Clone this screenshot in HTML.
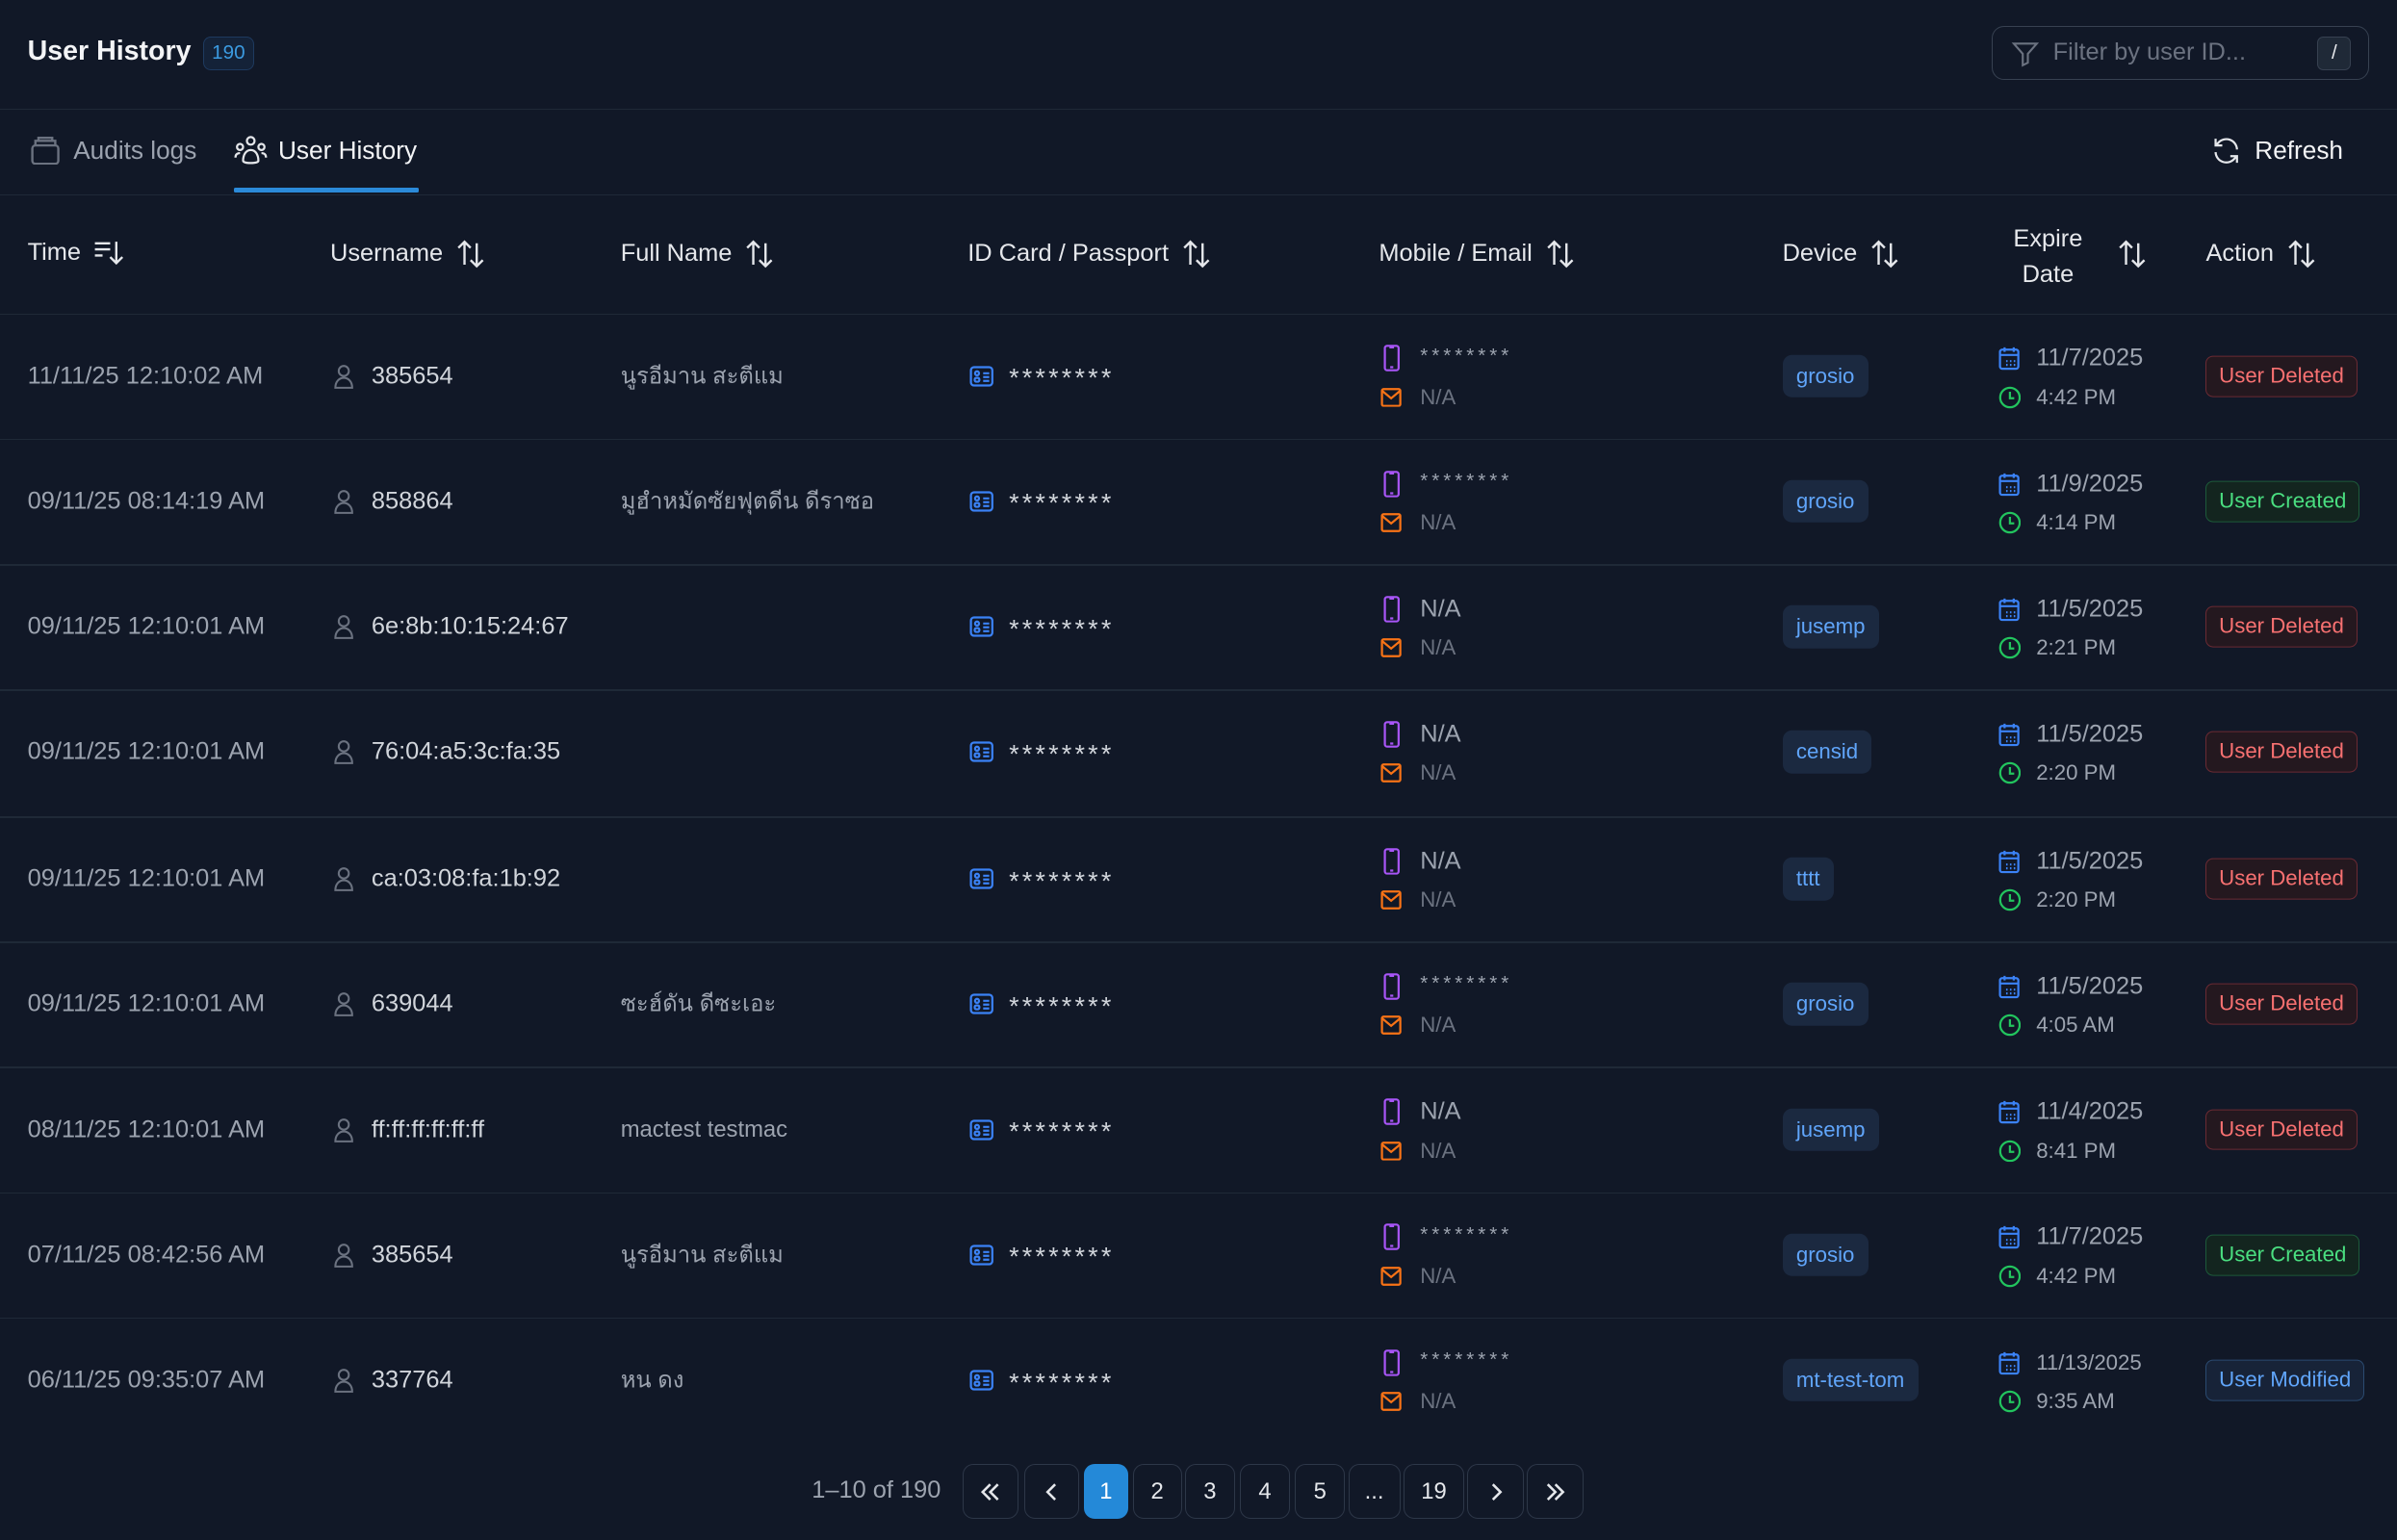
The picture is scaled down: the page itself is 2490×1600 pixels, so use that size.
<!DOCTYPE html>
<html><head><meta charset="utf-8"><style>
*{margin:0;padding:0;box-sizing:border-box}
html,body{width:2490px;height:1600px;background:#111827;overflow:hidden}
#w{zoom:1.588;width:1568px;height:1008px;position:relative;font-family:"Liberation Sans","Noto Sans CJK SC",sans-serif;color:#d1d5db}
.a{position:absolute;white-space:nowrap}
.line{position:absolute;left:0;width:1568px;height:1px;background:#1f2937}
.h{font-size:16px;color:#e5e7eb;display:flex;align-items:center;gap:8px}
.r{position:absolute;left:0;width:1568px;height:82px}
.t{position:absolute;top:50%;transform:translateY(-50%);font-size:16px;color:#9ca3af}
.u{color:#d1d5db}
.sm{font-size:13.5px;color:#6b7280}
.chip{position:absolute;top:50%;transform:translateY(-50%);left:1166px;height:28px;line-height:28px;padding:0 9px;border-radius:6px;background:#1b2940;color:#60a5fa;font-size:14px}
.bd{position:absolute;top:50%;transform:translateY(-50%);left:1443px;height:27px;line-height:25px;padding:0 8px;border-radius:5px;font-size:14px;border:1px solid}
.del{color:#f87171;border-color:#6b2a33;background:#24181f}
.cre{color:#4ade80;border-color:#1d5a3a;background:#13251f}
.mod{color:#60a5fa;border-color:#2a4a70;background:#172338}
svg{display:block}
.pb{position:absolute;top:958px;height:36px;border:1px solid #2d3748;border-radius:7px;color:#e5e7eb;font-size:15px;display:flex;align-items:center;justify-content:center}
</style></head><body><div id="w">
<div class="a" style="left:18px;top:23px;font-size:18px;font-weight:bold;color:#f3f4f6">User History</div>
<div class="a" style="left:133px;top:24px;height:22px;padding:0 5px;border:1px solid #1e3a5f;background:#142238;border-radius:5px;color:#3b9ae0;font-size:13px;line-height:20px">190</div>
<div class="a" style="left:1303px;top:17px;width:247px;height:35px;border:1px solid #374151;border-radius:8px"></div>
<svg class="a" style="left:1315px;top:25px" width="20" height="20" viewBox="0 0 24 24" fill="none" stroke="#6b7280" stroke-width="1.6"><path d="M3 4h18l-7 8v7l-4 2v-9z"/></svg>
<div class="a" style="left:1343px;top:25px;font-size:16px;color:#6b7280">Filter by user ID...</div>
<div class="a" style="left:1516px;top:24px;width:22px;height:22px;border:1px solid #374151;border-radius:4px;background:#1f2937;color:#e5e7eb;font-size:13px;text-align:center;line-height:20px">/</div>
<div class="line" style="top:71px"></div>
<svg class="a" style="left:20px;top:88px" width="19" height="20" viewBox="0 0 19 20" fill="none" stroke="#6b7280" stroke-width="1.5"><rect x="1" y="7" width="17" height="12" rx="2"/><path d="M3 7V4h13v3M5 4V2h9v2"/></svg>
<div class="a" style="left:48px;top:89px;font-size:16.5px;color:#9ca3af">Audits logs</div>
<svg class="a" style="left:153px;top:88px" width="22" height="20" viewBox="0 0 22 20" fill="none" stroke="#e5e7eb" stroke-width="1.4"><circle cx="11" cy="4" r="2.5"/><circle cx="4" cy="8" r="2"/><circle cx="18" cy="8" r="2"/><path d="M6 17c0-4 2-7 5-7s5 3 5 7c0 2-10 2-10 0zM1 15c0-2 1-3 3-3M21 15c0-2-1-3-3-3"/></svg>
<div class="a" style="left:182px;top:89px;font-size:16.5px;color:#f3f4f6">User History</div>
<div class="a" style="left:153px;top:123px;width:121px;height:3px;background:#2b8ad9;border-radius:1px"></div>
<svg class="a" style="left:1446px;top:88px" width="21" height="21" viewBox="0 0 24 24" fill="none" stroke="#e5e7eb" stroke-width="1.6"><path d="M20 11a8 8 0 0 0-14-5l-2 2M4 3v5h5M4 13a8 8 0 0 0 14 5l2-2M20 21v-5h-5"/></svg>
<div class="a" style="left:1475px;top:89px;font-size:16.5px;color:#f3f4f6">Refresh</div>
<div class="line" style="top:127px"></div>

<div class="a h" style="left:18px;top:156px">Time <svg width="20" height="18" viewBox="0 0 20 18" fill="none" stroke="#e5e7eb" stroke-width="1.5"><path d="M1 3h10M1 7h10M1 11h5M15 2v14M11 12l4 4 4-4"/></svg></div>
<div class="a h" style="left:216px;top:156px">Username <svg width="20" height="20" viewBox="0 0 20 20" fill="none" stroke="#e5e7eb" stroke-width="1.5"><path d="M6 17V2M2 6l4-4 4 4M14 3v15M10 14l4 4 4-4"/></svg></div>
<div class="a h" style="left:406px;top:156px">Full Name <svg width="20" height="20" viewBox="0 0 20 20" fill="none" stroke="#e5e7eb" stroke-width="1.5"><path d="M6 17V2M2 6l4-4 4 4M14 3v15M10 14l4 4 4-4"/></svg></div>
<div class="a h" style="left:633px;top:156px">ID Card / Passport <svg width="20" height="20" viewBox="0 0 20 20" fill="none" stroke="#e5e7eb" stroke-width="1.5"><path d="M6 17V2M2 6l4-4 4 4M14 3v15M10 14l4 4 4-4"/></svg></div>
<div class="a h" style="left:902px;top:156px">Mobile / Email <svg width="20" height="20" viewBox="0 0 20 20" fill="none" stroke="#e5e7eb" stroke-width="1.5"><path d="M6 17V2M2 6l4-4 4 4M14 3v15M10 14l4 4 4-4"/></svg></div>
<div class="a h" style="left:1166px;top:156px">Device <svg width="20" height="20" viewBox="0 0 20 20" fill="none" stroke="#e5e7eb" stroke-width="1.5"><path d="M6 17V2M2 6l4-4 4 4M14 3v15M10 14l4 4 4-4"/></svg></div>
<div class="a" style="left:1317px;top:145px;font-size:16px;color:#e5e7eb;text-align:center;line-height:23px">Expire<br>Date</div>
<svg class="a" style="left:1385px;top:156px" width="20" height="20" viewBox="0 0 20 20" fill="none" stroke="#e5e7eb" stroke-width="1.5"><path d="M6 17V2M2 6l4-4 4 4M14 3v15M10 14l4 4 4-4"/></svg>
<div class="a h" style="left:1443px;top:156px">Action <svg width="20" height="20" viewBox="0 0 20 20" fill="none" stroke="#e5e7eb" stroke-width="1.5"><path d="M6 17V2M2 6l4-4 4 4M14 3v15M10 14l4 4 4-4"/></svg></div>
<div class="line" style="top:205px"></div>

<div id="rows"></div>

<div class="a" style="left:531px;top:966px;font-size:16px;color:#9ca3af">1–10 of 190</div>
<div class="pb" style="left:630px;width:36px"><svg width="16" height="14" viewBox="0 0 16 14" fill="none" stroke="#e5e7eb" stroke-width="1.6"><path d="M8 2L3 7l5 5M13 2L8 7l5 5"/></svg></div>
<div class="pb" style="left:670px;width:36px"><svg width="10" height="14" viewBox="0 0 10 14" fill="none" stroke="#e5e7eb" stroke-width="1.6"><path d="M7 2L2 7l5 5"/></svg></div>
<div class="pb" style="left:709px;width:29px;background:#2489d8;border-color:#2489d8;color:#fff">1</div>
<div class="pb" style="left:741px;width:32px">2</div>
<div class="pb" style="left:775px;width:33px">3</div>
<div class="pb" style="left:811px;width:33px">4</div>
<div class="pb" style="left:847px;width:33px">5</div>
<div class="pb" style="left:882px;width:34px">...</div>
<div class="pb" style="left:918px;width:40px">19</div>
<div class="pb" style="left:960px;width:37px"><svg width="10" height="14" viewBox="0 0 10 14" fill="none" stroke="#e5e7eb" stroke-width="1.6"><path d="M3 2l5 5-5 5"/></svg></div>
<div class="pb" style="left:999px;width:37px"><svg width="16" height="14" viewBox="0 0 16 14" fill="none" stroke="#e5e7eb" stroke-width="1.6"><path d="M3 2l5 5-5 5M8 2l5 5-5 5"/></svg></div>
</div>
<script>
var D=[
["11/11/25 12:10:02 AM","385654","นูรอีมาน สะตีแม","********","grosio","11/7/2025","4:42 PM","del"],
["09/11/25 08:14:19 AM","858864","มูฮำหมัดซัยฟุตดีน ดีราซอ","********","grosio","11/9/2025","4:14 PM","cre"],
["09/11/25 12:10:01 AM","6e:8b:10:15:24:67","","N/A","jusemp","11/5/2025","2:21 PM","del"],
["09/11/25 12:10:01 AM","76:04:a5:3c:fa:35","","N/A","censid","11/5/2025","2:20 PM","del"],
["09/11/25 12:10:01 AM","ca:03:08:fa:1b:92","","N/A","tttt","11/5/2025","2:20 PM","del"],
["09/11/25 12:10:01 AM","639044","ซะฮ์ดัน ดีซะเอะ","********","grosio","11/5/2025","4:05 AM","del"],
["08/11/25 12:10:01 AM","ff:ff:ff:ff:ff:ff","mactest testmac","N/A","jusemp","11/4/2025","8:41 PM","del"],
["07/11/25 08:42:56 AM","385654","นูรอีมาน สะตีแม","********","grosio","11/7/2025","4:42 PM","cre"],
["06/11/25 09:35:07 AM","337764","หน ดง","********","mt-test-tom","11/13/2025","9:35 AM","mod"]];
var L={del:"User Deleted",cre:"User Created",mod:"User Modified"};
var tops=[205,287,369,451,534,616,698,780,862],h="";
D.forEach(function(d,i){
var m=d[3]=="N/A"?'<div class="t" style="left:929px;top:36%;font-size:16px;color:#9ca3af">N/A</div>':'<div class="t" style="left:929px;top:34%;font-size:13px;color:#9ca3af;letter-spacing:2.5px">********</div>';
h+='<div class="r" style="top:'+tops[i]+'px">'+
'<div class="t" style="left:18px">'+d[0]+'</div>'+
'<svg class="t" style="left:218px" width="14" height="17" viewBox="0 0 14 17" fill="none" stroke="#6b7280" stroke-width="1.3"><circle cx="7" cy="5" r="3.3"/><path d="M1.5 16c0-4 2.5-6.5 5.5-6.5s5.5 2.5 5.5 6.5z"/></svg>'+
'<div class="t u" style="left:243px">'+d[1]+'</div>'+
'<div class="t" style="left:406px;font-size:15px">'+d[2]+'</div>'+
'<svg class="t" style="left:634px" width="16" height="14" viewBox="0 0 16 14" fill="none" stroke="#3b82f6" stroke-width="1.4"><rect x="1" y="1" width="14" height="12" rx="2"/><circle cx="5" cy="5" r="1.3"/><rect x="3.5" y="8" width="3" height="2.5" rx="1"/><path d="M9 5h4M9 7.5h4M9 10h4"/></svg>'+
'<div class="t u" style="left:660px;font-size:17px;top:52%;letter-spacing:2px">********</div>'+
'<svg class="t" style="left:905px;top:36%" width="11" height="18" viewBox="0 0 11 18" fill="none" stroke="#a855f7" stroke-width="1.4"><rect x="1" y="1" width="9" height="16" rx="1.5"/><path d="M4 2h3M4.5 15h2"/></svg>'+m+
'<svg class="t" style="left:903px;top:67%" width="14" height="13" viewBox="0 0 14 13" fill="none" stroke="#f97316" stroke-width="1.4"><rect x="1" y="1" width="12" height="11" rx="1"/><path d="M1 2l6 5 6-5"/></svg>'+
'<div class="t sm" style="left:929px;top:67%;font-size:14px">N/A</div>'+
'<div class="chip">'+d[4]+'</div>'+
'<svg class="t" style="left:1307px;top:36%" width="14" height="16" viewBox="0 0 14 16" fill="none" stroke="#3b82f6" stroke-width="1.4"><rect x="1" y="2.5" width="12" height="12.5" rx="1.5"/><path d="M1 6h12M4 1v3M10 1v3M5 10h1M7.5 10h1M10 10h1M5 12.5h1M7.5 12.5h1M10 12.5h1"/></svg>'+
'<div class="t" style="left:1332px;top:36%;color:#9ca3af;font-size:'+(d[5].length>9?14:16)+'px">'+d[5]+'</div>'+
'<svg class="t" style="left:1307px;top:67%" width="15" height="15" viewBox="0 0 16 16" fill="none" stroke="#22c55e" stroke-width="1.5"><circle cx="8" cy="8" r="6.8"/><path d="M8 4v4.5h3"/></svg>'+
'<div class="t" style="left:1332px;top:67%;font-size:14px;color:#9ca3af">'+d[6]+'</div>'+
'<div class="bd '+d[7]+'">'+L[d[7]]+'</div></div>';
if(i<8)h+='<div class="line" style="top:'+tops[i+1]+'px"></div>';
});
document.getElementById('rows').innerHTML=h;
</script>
</body></html>
